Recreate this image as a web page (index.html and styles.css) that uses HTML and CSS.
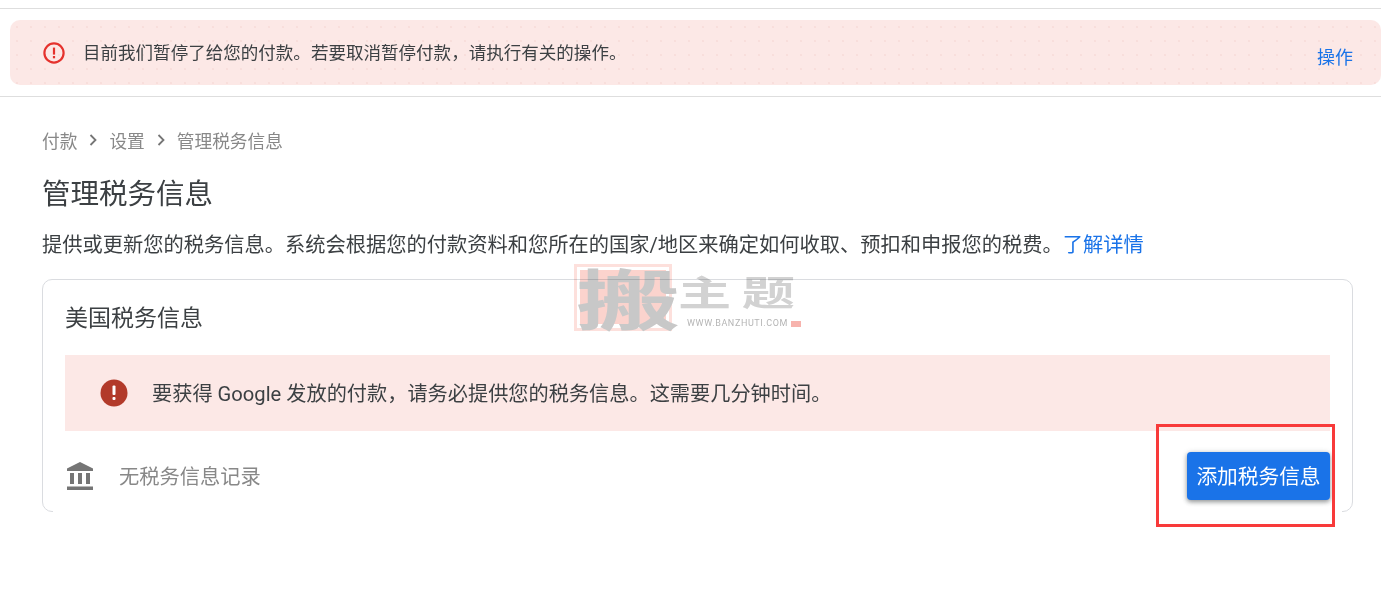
FILE: index.html
```html
<!DOCTYPE html>
<html lang="zh-CN">
<head>
    <meta charset="UTF-8">
    <title>管理税务信息</title>
    <link rel="stylesheet" href="styles.css">
</head>
<body>
    <div class="top-line"></div>
    <div class="banner-wrap">
        <div class="banner">
            <svg class="banner-icon" viewBox="0 0 24 24" width="24" height="24">
                <circle cx="12" cy="12" r="9.600" fill="none" stroke="#e5322d" stroke-width="2.200"/>
                <rect x="10.900" y="6.600" width="2.200" height="7" fill="#e5322d"/>
                <rect x="10.900" y="15" width="2.200" height="2.300" fill="#e5322d"/>
            </svg>
            <span class="banner-text">目前我们暂停了给您的付款。若要取消暂停付款，请执行有关的操作。</span>
            <a class="banner-action">操作</a>
        </div>
    </div>

    <main class="content">
        <div class="crumbs">
            <span>付款</span>
            <svg class="chev" viewBox="0 0 10 12" width="10" height="12"><path d="M2.500 1 7.500 6l-5 5" fill="none" stroke="#757575" stroke-width="1.800"/></svg>
            <span>设置</span>
            <svg class="chev" viewBox="0 0 10 12" width="10" height="12"><path d="M2.500 1 7.500 6l-5 5" fill="none" stroke="#757575" stroke-width="1.800"/></svg>
            <span>管理税务信息</span>
        </div>
        <h1 class="title">管理税务信息</h1>
        <p class="desc">提供或更新您的税务信息。系统会根据您的付款资料和您所在的国家/地区来确定如何收取、预扣和申报您的税费。<a class="link">了解详情</a></p>

        <section class="card">
            <h2 class="card-title">美国税务信息</h2>
            <div class="alert">
                <svg class="alert-icon" viewBox="0 0 28 28" width="28" height="28">
                    <circle cx="14" cy="14" r="13.500" fill="#b23a2a"/>
                    <rect x="12.500" y="6.500" width="3" height="9.500" rx="1" fill="#fff"/>
                    <rect x="12.500" y="18" width="3" height="3" rx="1" fill="#fff"/>
                </svg>
                <span class="alert-text">要获得 Google 发放的付款，请务必提供您的税务信息。这需要几分钟时间。</span>
            </div>
            <div class="row">
                <div class="empty">
                    <svg class="bank" viewBox="0 0 26 28" width="26" height="28">
                        <path d="M13 0 0 6.500V9h26V6.500z" fill="#757575"/>
                        <rect x="3" y="11" width="4" height="11" fill="#757575"/>
                        <rect x="11" y="11" width="4" height="11" fill="#757575"/>
                        <rect x="19" y="11" width="4" height="11" fill="#757575"/>
                        <rect x="0" y="24.500" width="26" height="3.500" fill="#757575"/>
                    </svg>
                    <span class="empty-text">无税务信息记录</span>
                </div>
                <button class="add-btn"><span class="add-btn-text">添加税务信息</span></button>
            </div>
        </section>
    </main>

    <!-- things pasted on top of the screenshot -->
    <div class="mark">
        <div class="mark-seal"></div>
        <span class="mark-big">搬</span>
        <span class="mark-name">主题</span>
        <span class="mark-url">WWW.BANZHUTI.COM</span>
        <span class="mark-dot"></span>
    </div>
    <div class="red-box"></div>
</body>
</html>
```

FILE: styles.css
```css
* {
    box-sizing: border-box;
}
body {
    margin: 0;
    height: 592px;
    overflow: hidden;
    position: relative;
    background: #fff;
    color: #3c4043;
    font-family: "Roboto", "Noto Sans CJK SC", sans-serif;
}
.top-line {
    height: 9px;
    border-bottom: 1px solid #dedede;
}
.banner-wrap {
    padding: 11px 0 11px 10px;
    height: 88px;
    border-bottom: 1px solid #dedede;
}
.banner {
    height: 65px;
    display: flex;
    align-items: center;
    padding: 0 28px 0 32px;
    background-color: #fce8e6;
    background-image: radial-gradient(#f8dedb 0.7px, transparent 0.8px);
    background-size: 14px 14px;
    border-radius: 10px;
}
.banner-icon {
    flex: none;
    margin-right: 17px;
}
.banner-text {
    flex: 1;
    font-size: 17.550px;
    position: relative;
    top: -1px;
}
.banner-action {
    color: #1a73e8;
    font-size: 18px;
    position: relative;
    top: 3px;
}
.content {
    padding: 0 28px 0 42px;
}
.crumbs {
    display: flex;
    align-items: center;
    margin-top: 30px;
    height: 26px;
    font-size: 17.700px;
    color: #888;
}
.chev {
    margin: 0 11px 0 11px;
}
.title {
    margin: 22px 0 0;
    font-size: 28.500px;
    line-height: 40px;
    font-weight: 400;
    color: #3c4043;
}
.desc {
    margin: 15px 0 0;
    font-size: 20.250px;
    line-height: 30px;
    color: #3c4043;
    white-space: nowrap;
}
.link {
    color: #1a73e8;
}
.card {
    position: relative;
    margin-top: 19px;
    height: 233px;
    padding: 0 22px;
    border: 1px solid #dadce0;
    border-radius: 10px;
}
/* bottom edge of the card is washed out, only the corners show */
.card::after {
    content: "";
    position: absolute;
    left: 10px;
    right: 10px;
    bottom: -1px;
    height: 1px;
    background: #fff;
}
.card-title {
    margin: 0;
    height: 75px;
    font-size: 23px;
    line-height: 77px;
    font-weight: 400;
    color: #3c4043;
}
.alert {
    height: 76px;
    display: flex;
    align-items: center;
    gap: 24px;
    padding-left: 35px;
    background: #fce8e6;
    font-size: 20.200px;
    color: #3c4043;
}
.alert-text {
    margin-top: -2px;
}
.row {
    height: 80px;
    display: flex;
    align-items: flex-start;
    justify-content: space-between;
}
.empty {
    display: flex;
    align-items: center;
    gap: 26px;
    height: 28px;
    margin-top: 31px;
    padding-left: 2px;
    font-size: 20.250px;
    color: #888;
}
.empty-text {
    margin-top: -2px;
}
.add-btn {
    width: 143px;
    height: 48px;
    margin-top: 21px;
    padding: 0 0 2px;
    border: 0;
    border-radius: 4px;
    background: #1a73e8;
    color: #fff;
    font-family: inherit;
    font-size: 20.700px;
    box-shadow: 0 2px 4px rgba(60, 64, 67, 0.45), 0 1px 6px rgba(60, 64, 67, 0.2);
}
.mark {
    position: absolute;
    left: 573px;
    top: 264px;
    width: 232px;
    height: 70px;
    mix-blend-mode: multiply;
}
.mark-seal {
    position: absolute;
    left: 1px;
    top: 0;
    width: 98px;
    height: 67px;
    padding: 3px 3px 4px;
    border: 3px solid #fde0dc;
    background: #fbd3cd;
    background-clip: content-box;
}
.mark-big {
    position: absolute;
    left: 3px;
    top: -6px;
    font-size: 66px;
    line-height: 90px;
    font-weight: 700;
    color: #c8c8c8;
    transform: scaleX(1.58);
    transform-origin: left center;
}
.mark-name {
    position: absolute;
    left: 105px;
    top: 9px;
    font-size: 35px;
    line-height: 44px;
    letter-spacing: 7px;
    font-weight: 700;
    color: #d2d2d2;
    white-space: nowrap;
    transform: scaleX(1.52);
    transform-origin: left center;
}
.mark-url {
    position: absolute;
    left: 114px;
    top: 54px;
    font-size: 9px;
    line-height: 11px;
    letter-spacing: 0.600px;
    color: #b5b5b5;
    white-space: nowrap;
}
.mark-dot {
    position: absolute;
    left: 218px;
    top: 57px;
    width: 10px;
    height: 6px;
    background: #f7b3ad;
}
.red-box {
    position: absolute;
    left: 1156px;
    top: 424px;
    width: 179px;
    height: 103px;
    border: 3px solid #f83a3a;
}
```
